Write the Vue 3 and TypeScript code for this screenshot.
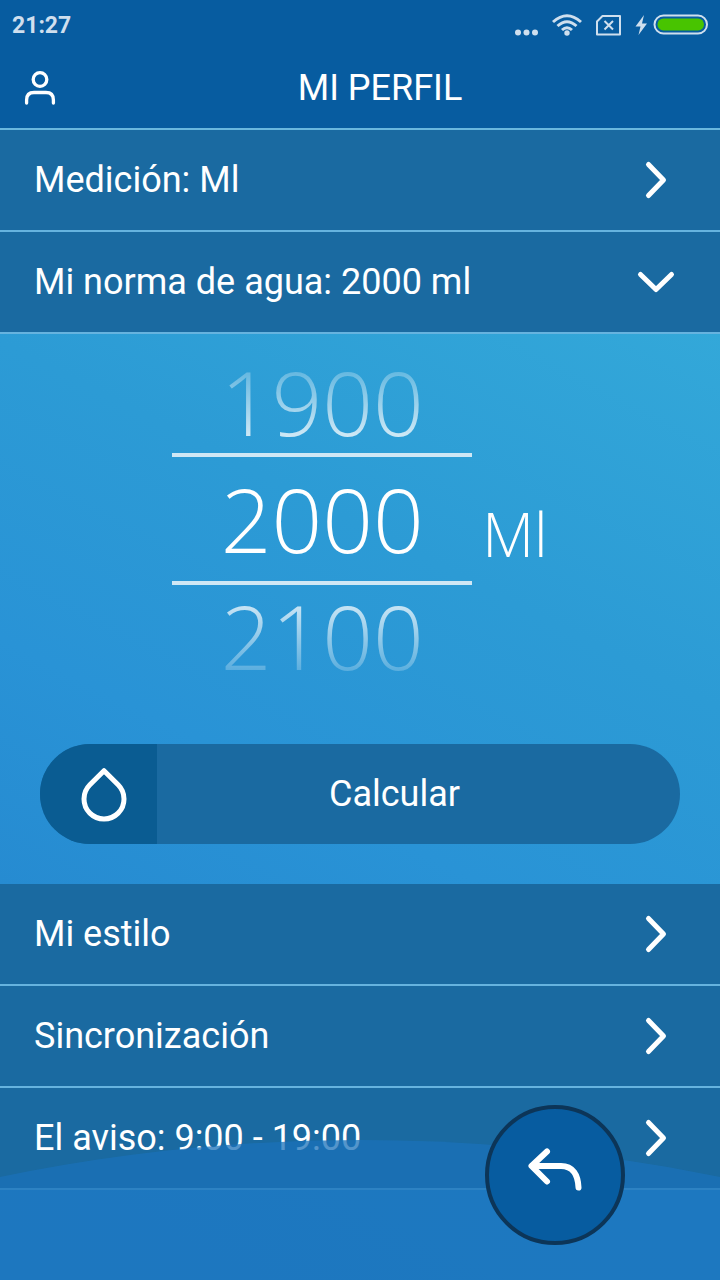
<script setup lang="ts">
import { computed, ref } from 'vue'

interface Row {
  id: string
  label: string
  open?: boolean
}

const step = 100
const amount = ref(2000)

const topRows = computed<Row[]>(() => [
  { id: 'unit', label: 'Medición: Ml' },
  { id: 'norm', label: `Mi norma de agua: ${amount.value} ml`, open: true },
])

const bottomRows: Row[] = [
  { id: 'style', label: 'Mi estilo' },
  { id: 'sync', label: 'Sincronización' },
  { id: 'alert', label: 'El aviso: 9:00 - 19:00' },
]
</script>

<template>
  <div class="screen">
    <div class="status">
      <span class="clock">21:27</span>
      <svg class="indicators" width="194" height="30" viewBox="0 0 194 30" aria-hidden="true">
        <g fill="#cfdfee">
          <circle cx="4" cy="21.500" r="3" />
          <circle cx="12.500" cy="21.500" r="3" />
          <circle cx="21" cy="21.500" r="3" />
          <circle cx="53" cy="22" r="2.700" />
          <path d="M130 4 L121.500 15.500 H126.500 L124.500 24 L133 12.500 H128 Z" />
        </g>
        <g fill="none" stroke="#cfdfee" stroke-width="3">
          <path d="M39 11 Q53 -1.500 67 11" />
          <path d="M43.500 15 Q53 6.500 62.500 15" />
          <path d="M48 19 Q53 14.500 58 19" />
        </g>
        <g fill="none" stroke="#cfdfee" stroke-width="2">
          <path d="M88.500 5 H106 V23.500 H83 V10.500 Z" stroke-linejoin="round" />
          <path d="M90.500 10 L99 18.500 M99 10 L90.500 18.500" />
          <rect x="140.500" y="4.500" width="52.500" height="18" rx="9" />
        </g>
        <rect x="143.500" y="7.500" width="46.500" height="12" rx="6" fill="#48c400" />
      </svg>
    </div>

    <header class="bar">
      <button class="profile" type="button" aria-label="Perfil">
        <svg width="40" height="40" viewBox="0 0 40 40" fill="none" stroke="#fff" stroke-width="3.300">
          <circle cx="20" cy="11.500" r="6.800" />
          <path d="M6.600 35 V32 Q6.600 24.500 14 24.500 H26 Q33.400 24.500 33.400 32 V35" stroke-linecap="round" />
        </svg>
      </button>
      <h1 class="title">MI PERFIL</h1>
    </header>

    <main>
      <button
        v-for="row in topRows"
        :key="row.id"
        class="row"
        type="button"
        :aria-expanded="row.open ? 'true' : undefined"
      >
        <span>{{ row.label }}</span>
        <svg class="chevron" :class="{ open: row.open }" viewBox="0 0 40 40" aria-hidden="true">
          <path d="M12.500 4.500 L27.500 20 L12.500 35.500" />
        </svg>
      </button>

      <section class="panel">
        <div class="choice">
          <div class="wheel">
            <button class="value previous" type="button" @click="amount -= step">{{ amount - step }}</button>
            <output class="value current">{{ amount }}</output>
            <button class="value next" type="button" @click="amount += step">{{ amount + step }}</button>
          </div>
          <span class="unit">Ml</span>
        </div>
        <button class="calculate" type="button">
          <span class="drop">
            <svg width="60" height="60" viewBox="0 0 60 60" aria-hidden="true">
              <path d="M30 6.700 L15.900 20.800 A20 20 0 1 0 44.100 20.800 Z" />
            </svg>
          </span>
          <span class="calculate-label">Calcular</span>
        </button>
      </section>

      <button v-for="row in bottomRows" :key="row.id" class="row" type="button">
        <span>{{ row.label }}</span>
        <svg class="chevron" viewBox="0 0 40 40" aria-hidden="true">
          <path d="M12.500 4.500 L27.500 20 L12.500 35.500" />
        </svg>
      </button>
    </main>

    <svg class="wave" viewBox="0 0 720 140" preserveAspectRatio="none" aria-hidden="true">
      <path d="M0 37 Q360 -37 720 37 V140 H0 Z" />
    </svg>
    <button class="back" type="button" aria-label="Volver">
      <svg width="70" height="70" viewBox="0 0 70 70" aria-hidden="true">
        <path d="M27 11.500 L11.500 26 L27 41.500 M12 26 H41 C53 26 58 35 58.500 47.500" />
      </svg>
    </button>
  </div>
</template>

<style>
body {
  margin: 0;
}
</style>

<style scoped>
.screen {
  position: relative;
  display: flex;
  flex-direction: column;
  min-height: 100vh;
  overflow: hidden;
  background: linear-gradient(207deg, #33a8d9 20%, #2c9bd5 43%, #2993d6 61%, #268bd1 76%, #2488d0 100%);
  color: #fff;
  font-family: Roboto, "Noto Sans", sans-serif;
}

button {
  margin: 0;
  padding: 0;
  border: 0;
  background: none;
  color: inherit;
  font: inherit;
  cursor: pointer;
}

.status {
  display: flex;
  align-items: center;
  justify-content: space-between;
  box-sizing: border-box;
  height: 48px;
  padding: 3px 12px 0;
  background: #075ca0;
}

.clock {
  color: #cfdfee;
  font-size: 23px;
  font-weight: 700;
  line-height: 28px;
}

.bar {
  display: flex;
  align-items: center;
  height: 80px;
  padding-right: 40px;
  border-bottom: 2px solid #69b8df;
  background: #075ca0;
}

.profile {
  display: flex;
  justify-content: center;
  width: 80px;
}

.title {
  flex: 1;
  margin: 0;
  font-size: 36px;
  font-weight: 400;
  line-height: 44px;
  text-align: center;
}

.row {
  display: flex;
  align-items: center;
  justify-content: space-between;
  width: 100%;
  height: 102px;
  padding: 0 44px 0 34px;
  border-bottom: 2px solid #66b3df;
  background: #1a6aa1;
  font-size: 36px;
  line-height: 44px;
  text-align: left;
}

.chevron {
  width: 40px;
  height: 40px;
  fill: none;
  stroke: #fff;
  stroke-width: 5;
  stroke-linecap: round;
  stroke-linejoin: round;
}

.chevron.open {
  transform: rotate(90deg);
}

.panel {
  display: flex;
  flex-direction: column;
  gap: 57px;
  padding: 17px 40px 40px;
}

.choice {
  display: flex;
  align-items: center;
  justify-content: center;
  gap: 10px;
  font-family: "Open Sans", "Noto Sans", sans-serif;
  font-weight: 300;
}

.wheel {
  display: flex;
  flex-direction: column;
  width: 300px;
}

.value {
  display: block;
  height: 102px;
  font-size: 89px;
  line-height: 102px;
  text-align: center;
}

.current {
  height: 124px;
  border-top: 4px solid #cfe7f5;
  border-bottom: 4px solid #cfe7f5;
  line-height: 124px;
}

.previous {
  mask-image: linear-gradient(to bottom, rgba(0, 0, 0, 0.1), rgba(0, 0, 0, 0.9));
}

.next {
  mask-image: linear-gradient(to top, rgba(0, 0, 0, 0.1), rgba(0, 0, 0, 0.9));
}

.unit {
  margin-top: 30px;
  font-size: 60px;
  line-height: 72px;
}

.calculate {
  display: flex;
  align-items: center;
  height: 100px;
  overflow: hidden;
  border-radius: 50px;
  background: #1a6aa1;
  font-size: 36px;
  line-height: 44px;
}

.drop {
  display: flex;
  align-items: center;
  width: 83px;
  height: 100%;
  padding-left: 34px;
  background: #0a5c92;
}

.drop path {
  fill: none;
  stroke: #fff;
  stroke-width: 5;
  stroke-linejoin: round;
}

.calculate-label {
  flex: 1;
  padding-right: 48px;
  text-align: center;
}

.wave {
  position: absolute;
  bottom: 0;
  left: 0;
  width: 100%;
  height: 140px;
  fill: rgba(27, 113, 186, 0.75);
  pointer-events: none;
}

.back {
  position: absolute;
  right: 95px;
  bottom: 35px;
  display: flex;
  align-items: center;
  justify-content: center;
  width: 140px;
  height: 140px;
  border: 4px solid #0c3558;
  border-radius: 50%;
  background: #075ca0;
}

.back path {
  fill: none;
  stroke: #fff;
  stroke-width: 6;
  stroke-linecap: round;
  stroke-linejoin: round;
}
</style>
